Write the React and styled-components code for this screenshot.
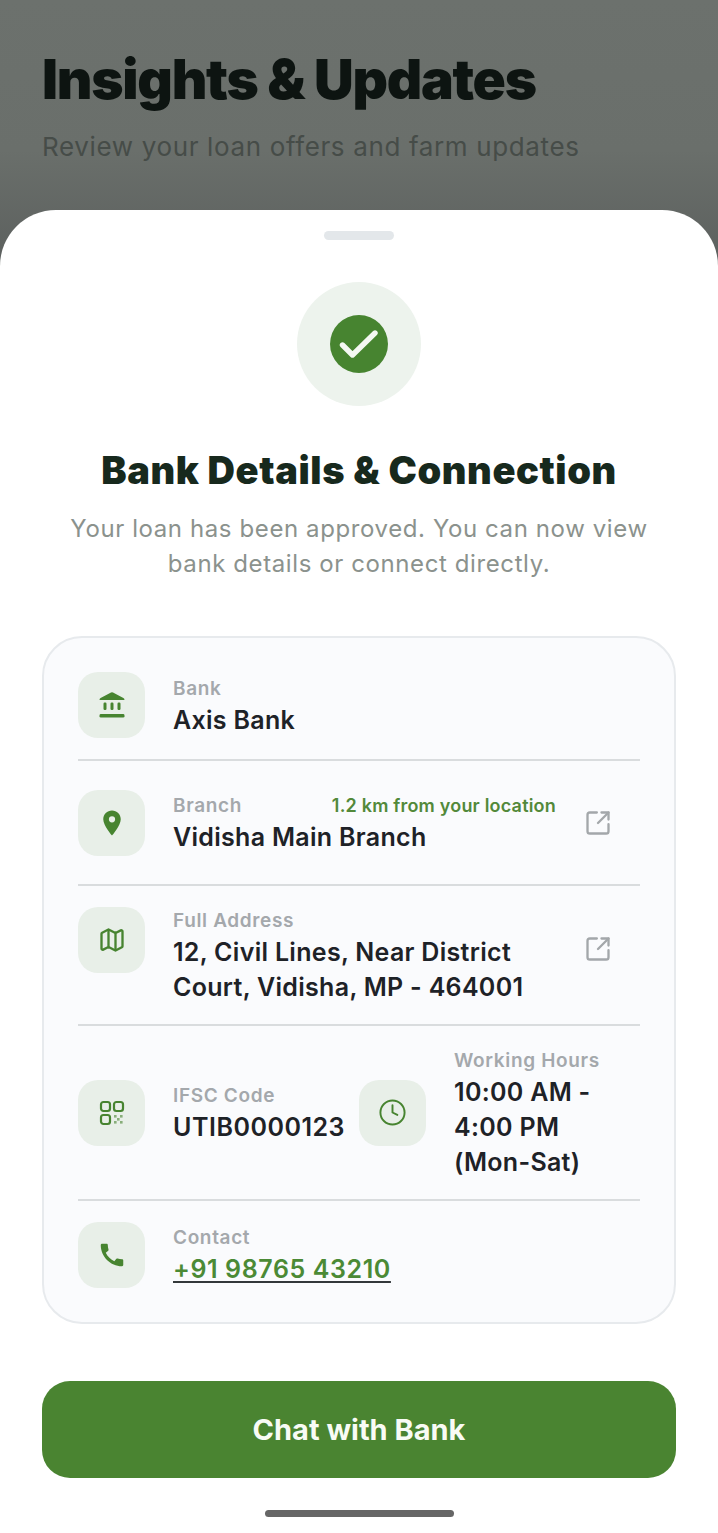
import { Clock, Map, SquareArrowOutUpRight } from "lucide-react"
import { MdLocationOn, MdCall } from "react-icons/md"
import styled, { createGlobalStyle } from "styled-components"

const GlobalStyle = createGlobalStyle`
    html, body {
        margin: 0;
        padding: 0;
    }

    body {
        font-family: Inter, "Noto Sans", sans-serif;
    }
`

const Page = styled.div`
    width: 718px;
    height: 1533px;
    display: flex;
    flex-direction: column;
    overflow: hidden;
    background: linear-gradient(180deg, #6c716d 0%, #6a6f6b 150px, #5c605e 265px);
`

const Header = styled.header`
    height: 210px;
    flex-shrink: 0;
    box-sizing: border-box;
    padding: 46px 42px 0;
`

const PageTitle = styled.h1`
    margin: 0;
    font-size: 55px;
    line-height: 66px;
    font-weight: 900;
    letter-spacing: -1.26px;
    color: #0d1411;
`

const PageSubtitle = styled.p`
    margin: 17px 0 0;
    font-size: 26px;
    line-height: 36px;
    letter-spacing: 0.64px;
    color: #464c48;
`

const Sheet = styled.section`
    flex: 1;
    display: flex;
    flex-direction: column;
    align-items: center;
    box-sizing: border-box;
    padding: 21px 42px 0;
    background: #ffffff;
    border-radius: 56px 56px 0 0;
`

const Handle = styled.div`
    width: 70px;
    height: 9px;
    border-radius: 5px;
    background: #e3e7ea;
`

const SuccessCircle = styled.div`
    width: 124px;
    height: 124px;
    margin-top: 42px;
    display: flex;
    align-items: center;
    justify-content: center;
    border-radius: 50%;
    background: #edf3ed;
`

const SuccessDot = styled.div`
    width: 58px;
    height: 58px;
    display: flex;
    align-items: center;
    justify-content: center;
    border-radius: 50%;
    background: #478430;
    color: #f4f8f2;
`

const Title = styled.h2`
    margin: 40px 0 0;
    font-size: 38px;
    line-height: 48px;
    font-weight: 900;
    letter-spacing: 0.6px;
    color: #17291d;
    text-align: center;
`

const Subtitle = styled.p`
    margin: 17px 0 0;
    font-size: 24px;
    line-height: 35px;
    letter-spacing: 0.6px;
    color: #8b928d;
    text-align: center;
`

const Card = styled.div`
    width: 634px;
    height: 688px;
    margin-top: 55px;
    box-sizing: border-box;
    padding: 34px 34px 0;
    border: 2px solid #e7eaed;
    border-radius: 40px;
    background: #fafbfd;
`

const Row = styled.div`
    display: flex;
    align-items: ${props => props.$align || "center"};
    padding-bottom: 21px;
    margin-bottom: 21px;
    border-bottom: ${props => (props.$last ? "none" : "2px solid #d9dcde")};
`

const Cell = styled.div`
    display: flex;
    align-items: center;
    min-width: 0;
`

const HoursCell = styled(Cell)`
    flex: 1;
    margin-left: 14px;
`

const IconBox = styled.div`
    width: 67px;
    height: 66px;
    flex-shrink: 0;
    margin-right: 28px;
    display: flex;
    align-items: center;
    justify-content: center;
    border-radius: 20px;
    background: #e8efe8;
    color: #478430;
`

const Details = styled.div`
    flex: 1;
    min-width: 0;
`

const LabelRow = styled.div`
    display: flex;
    justify-content: space-between;
    align-items: center;
    margin: 1px 0;
`

const Label = styled.div`
    font-size: 19px;
    line-height: 26px;
    margin: 1px 0;
    font-weight: 600;
    letter-spacing: 0.65px;
    color: #a4a8ac;

    ${LabelRow} & {
        margin: 0;
    }
`

const Distance = styled.div`
    font-size: 18px;
    line-height: 26px;
    font-weight: 600;
    letter-spacing: 0.2px;
    color: #52893a;
`

const Value = styled.div`
    font-size: 25px;
    line-height: 35px;
    margin-bottom: -2px;
    font-weight: 600;
    letter-spacing: ${props => (props.$wide ? "0.52px" : "0.3px")};
    color: #1e2227;
`

const NoWrap = styled.span`
    white-space: nowrap;
`

const PhoneLink = styled.a`
    font-size: 25px;
    line-height: 35px;
    font-weight: 600;
    letter-spacing: 0.6px;
    color: #4b8a35;
    text-decoration: underline;
    text-decoration-color: #33383a;
    text-underline-offset: 3px;
    text-decoration-thickness: 2px;
`

const LinkButton = styled.div`
    width: 84px;
    height: 81px;
    flex-shrink: 0;
    margin-top: ${props => props.$nudge || 0}px;
    display: flex;
    align-items: center;
    justify-content: center;
    color: #a3a7aa;
`

const ChatButton = styled.button`
    width: 634px;
    height: 97px;
    margin-top: 57px;
    flex-shrink: 0;
    border: none;
    border-radius: 28px;
    background: #4a8431;
    color: #f8fbf5;
    font-family: inherit;
    font-size: 29px;
    font-weight: 700;
`

const HomeBar = styled.div`
    width: 189px;
    height: 7px;
    margin-top: 32px;
    flex-shrink: 0;
    border-radius: 4px;
    background: #666666;
`

const CheckIcon = () => (
    <svg width="40" height="40" viewBox="0 0 40 40" fill="none" stroke="currentColor" strokeWidth="5.4" strokeLinecap="round" strokeLinejoin="round">
        <path d="M3.5 21 L13.5 31 L36 9" />
    </svg>
)

const BankIcon = () => (
    <svg width="28" height="28" viewBox="0 0 28 28" fill="currentColor">
        <path d="M13 1.6 Q14 1 15 1.6 L25.4 7 Q26.5 7.6 26.5 9 H1.5 Q1.5 7.6 2.6 7 Z" />
        <rect x="5.5" y="11.5" width="3" height="7.5" rx="1.2" />
        <rect x="12.5" y="11.5" width="3" height="7.5" rx="1.2" />
        <rect x="19.5" y="11.5" width="3" height="7.5" rx="1.2" />
        <rect x="1.5" y="23" width="25" height="3.6" rx="1.4" />
    </svg>
)

const QrIcon = () => (
    <svg width="26" height="26" viewBox="0 0 26 26" fill="none" stroke="currentColor" strokeWidth="2.2">
        <rect x="2" y="2" width="9" height="9" rx="2.4" />
        <rect x="15" y="2" width="9" height="9" rx="2.4" />
        <rect x="2" y="15" width="9" height="9" rx="2.4" />
        <g fill="currentColor" stroke="none" opacity="0.6">
            <rect x="15" y="15" width="2.6" height="2.6" />
            <rect x="21" y="15" width="2.6" height="2.6" />
            <rect x="18" y="18" width="2.6" height="2.6" />
            <rect x="15" y="21" width="2.6" height="2.6" />
            <rect x="21" y="21" width="2.6" height="2.6" />
        </g>
    </svg>
)

const App = () => {
    return (
        <>
            <GlobalStyle />
            <Page>
                <Header>
                    <PageTitle>Insights &amp; Updates</PageTitle>
                    <PageSubtitle>Review your loan offers and farm updates</PageSubtitle>
                </Header>
                <Sheet>
                    <Handle />
                    <SuccessCircle>
                        <SuccessDot>
                            <CheckIcon />
                        </SuccessDot>
                    </SuccessCircle>
                    <Title>Bank Details &amp; Connection</Title>
                    <Subtitle>
                        Your loan has been approved. You can now view
                        <br />
                        bank details or connect directly.
                    </Subtitle>
                    <Card>
                        <Row>
                            <IconBox>
                                <BankIcon />
                            </IconBox>
                            <Details>
                                <Label>Bank</Label>
                                <Value>Axis Bank</Value>
                            </Details>
                        </Row>
                        <Row>
                            <IconBox>
                                <MdLocationOn size={30} />
                            </IconBox>
                            <Details>
                                <LabelRow>
                                    <Label>Branch</Label>
                                    <Distance>1.2 km from your location</Distance>
                                </LabelRow>
                                <Value>Vidisha Main Branch</Value>
                            </Details>
                            <LinkButton>
                                <SquareArrowOutUpRight size={28} strokeWidth={2} />
                            </LinkButton>
                        </Row>
                        <Row $align="flex-start">
                            <IconBox>
                                <Map size={28} strokeWidth={2} />
                            </IconBox>
                            <Details>
                                <Label>Full Address</Label>
                                <Value>12, Civil Lines, Near District Court, Vidisha, MP - 464001</Value>
                            </Details>
                            <LinkButton $nudge={1}>
                                <SquareArrowOutUpRight size={28} strokeWidth={2} />
                            </LinkButton>
                        </Row>
                        <Row>
                            <Cell>
                                <IconBox>
                                    <QrIcon />
                                </IconBox>
                                <Details>
                                    <Label>IFSC Code</Label>
                                    <Value $wide>UTIB0000123</Value>
                                </Details>
                            </Cell>
                            <HoursCell>
                                <IconBox>
                                    <Clock size={29} strokeWidth={1.6} />
                                </IconBox>
                                <Details>
                                    <Label>Working Hours</Label>
                                    <Value>
                                        10:00 AM - 4:00 PM <NoWrap>(Mon-Sat)</NoWrap>
                                    </Value>
                                </Details>
                            </HoursCell>
                        </Row>
                        <Row $last>
                            <IconBox>
                                <MdCall size={30} />
                            </IconBox>
                            <Details>
                                <Label>Contact</Label>
                                <PhoneLink>+91 98765 43210</PhoneLink>
                            </Details>
                        </Row>
                    </Card>
                    <ChatButton>Chat with Bank</ChatButton>
                    <HomeBar />
                </Sheet>
            </Page>
        </>
    )
}

export default App
